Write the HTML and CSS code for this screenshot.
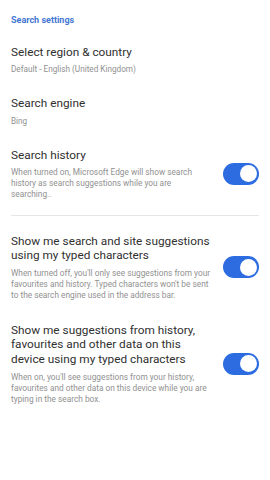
FILE: index.html
```html
<!DOCTYPE html>
<html lang="en">
<head>
    <meta charset="UTF-8">
    <meta name="viewport" content="width=device-width, initial-scale=1.0">
    <title>Search settings</title>
    <link rel="stylesheet" href="styles.css">
</head>
<body>
    <div class="page-title">Search settings</div>

    <div class="setting">
        <div class="setting-text">
            <div class="setting-title">Select region &amp; country</div>
            <div class="setting-sub">Default - English (United Kingdom)</div>
        </div>
    </div>

    <div class="setting">
        <div class="setting-text">
            <div class="setting-title">Search engine</div>
            <div class="setting-sub">Bing</div>
        </div>
    </div>

    <div class="setting">
        <div class="setting-text">
            <div class="setting-title">Search history</div>
            <div class="setting-desc">When turned on, Microsoft Edge will show search history as search suggestions while you are searching..</div>
        </div>
        <div class="toggle on"><span class="knob"></span></div>
    </div>

    <div class="divider"></div>

    <div class="setting">
        <div class="setting-text">
            <div class="setting-title">Show me search and site suggestions using my typed characters</div>
            <div class="setting-desc">When turned off, you'll only see suggestions from your favourites and history. Typed characters won't be sent to the search engine used in the address bar.</div>
        </div>
        <div class="toggle on"><span class="knob"></span></div>
    </div>

    <div class="setting">
        <div class="setting-text">
            <div class="setting-title">Show me suggestions from history, favourites and other data on this device using my typed characters</div>
            <div class="setting-desc">When on, you'll see suggestions from your history, favourites and other data on this device while you are typing in the search box.</div>
        </div>
        <div class="toggle on"><span class="knob"></span></div>
    </div>
</body>
</html>
```

FILE: styles.css
```css
* {
    margin: 0;
    padding: 0;
    box-sizing: border-box;
}

body {
    font-family: Roboto, "Noto Sans", sans-serif;
    width: 270px;
    height: 480px;
    background: #ffffff;
    color: #303030;
    overflow: hidden;
}

.page-title {
    color: #4477d2;
    font-size: 9px;
    font-weight: 700;
    line-height: 12px;
    padding: 14px 11px 8px;
}

.setting {
    display: flex;
    align-items: center;
    gap: 12px;
    padding: 11px;
}

.setting-text {
    flex: 1;
}

.setting-title {
    font-size: 11.8px;
    line-height: 14.5px;
    color: #303030;
}

.setting-sub {
    font-size: 8.2px;
    line-height: 10px;
    color: #919191;
    margin-top: 4.75px;
}

.setting-desc {
    font-size: 8.3px;
    line-height: 11px;
    color: #919191;
    margin-top: 5.25px;
}

.divider {
    height: 1px;
    background: #e6e6e6;
    margin: 3.5px 11px 6.75px;
}

.toggle {
    width: 36px;
    height: 22px;
    border-radius: 11px;
    background: #2c6ce0;
    flex-shrink: 0;
    position: relative;
}

.toggle .knob {
    position: absolute;
    top: 2.5px;
    right: 2.5px;
    width: 17px;
    height: 17px;
    border-radius: 50%;
    background: #ffffff;
}
```
